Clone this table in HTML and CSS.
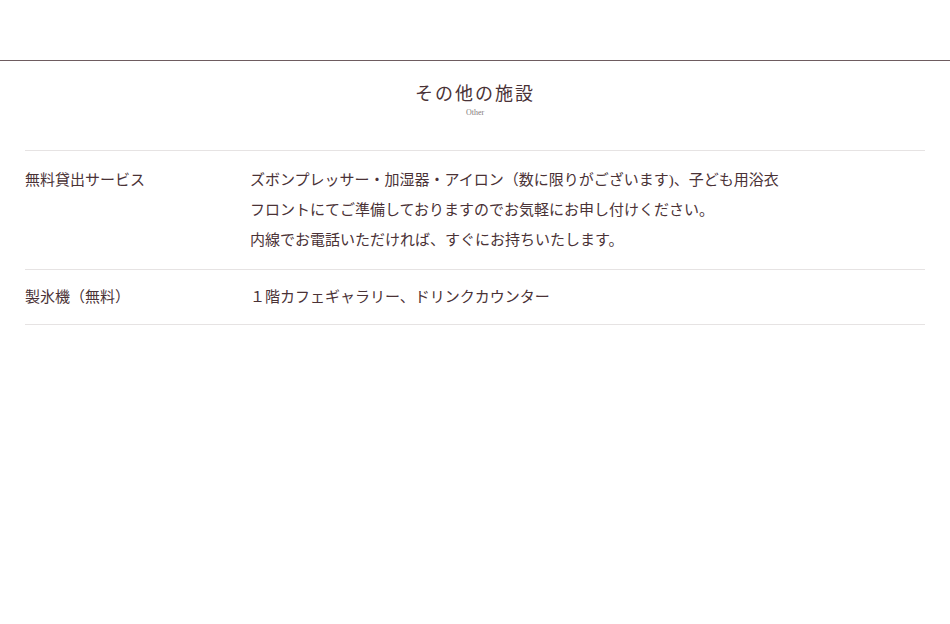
FILE: index.html
```html
<!DOCTYPE html>
<html lang="ja">
<head>
    <meta charset="UTF-8">
    <meta name="viewport" content="width=device-width, initial-scale=1.0">
    <title>その他の施設</title>
    <link rel="stylesheet" href="styles.css">
</head>
<body>
    <div class="page">
        <div class="section-head">
            <h2>その他の施設</h2>
            <p class="sub">Other</p>
        </div>

        <dl class="facility">
            <div class="row">
                <dt>無料貸出サービス</dt>
                <dd>ズボンプレッサー・加湿器・アイロン（数に限りがございます)、子ども用浴衣<br>フロントにてご準備しておりますのでお気軽にお申し付けください。<br>内線でお電話いただければ、すぐにお持ちいたします。</dd>
            </div>
            <div class="row">
                <dt>製氷機（無料）</dt>
                <dd>１階カフェギャラリー、ドリンクカウンター</dd>
            </div>
        </dl>
    </div>
</body>
</html>
```

FILE: styles.css
```css
body {
    margin: 0;
    background: #fff;
    color: #4a3236;
    font-family: "Liberation Serif", "Noto Sans CJK JP", serif;
}
.page {
    margin-top: 60px;
    border-top: 1px solid #6e5c60;
}
.section-head {
    text-align: center;
    padding-top: 21px;
}
.section-head h2 {
    margin: 0;
    font-size: 18px;
    font-weight: 400;
    letter-spacing: 2px;
    line-height: 24px;
}
.sub {
    margin: 2px 0 0;
    font-size: 8px;
    line-height: 10px;
    color: #857b7d;
}
.facility {
    margin: 32px 25px 0;
    border-top: 1px solid #e6e3e3;
}
.row {
    display: flex;
    border-bottom: 1px solid #e6e3e3;
    padding: 14px 0;
}
.row:last-child {
    padding: 12px 0 12px;
}
.row dt {
    width: 225px;
    flex-shrink: 0;
    font-size: 15px;
    line-height: 30px;
}
.row dd {
    margin: 0;
    font-size: 15px;
    line-height: 30px;
}
```
